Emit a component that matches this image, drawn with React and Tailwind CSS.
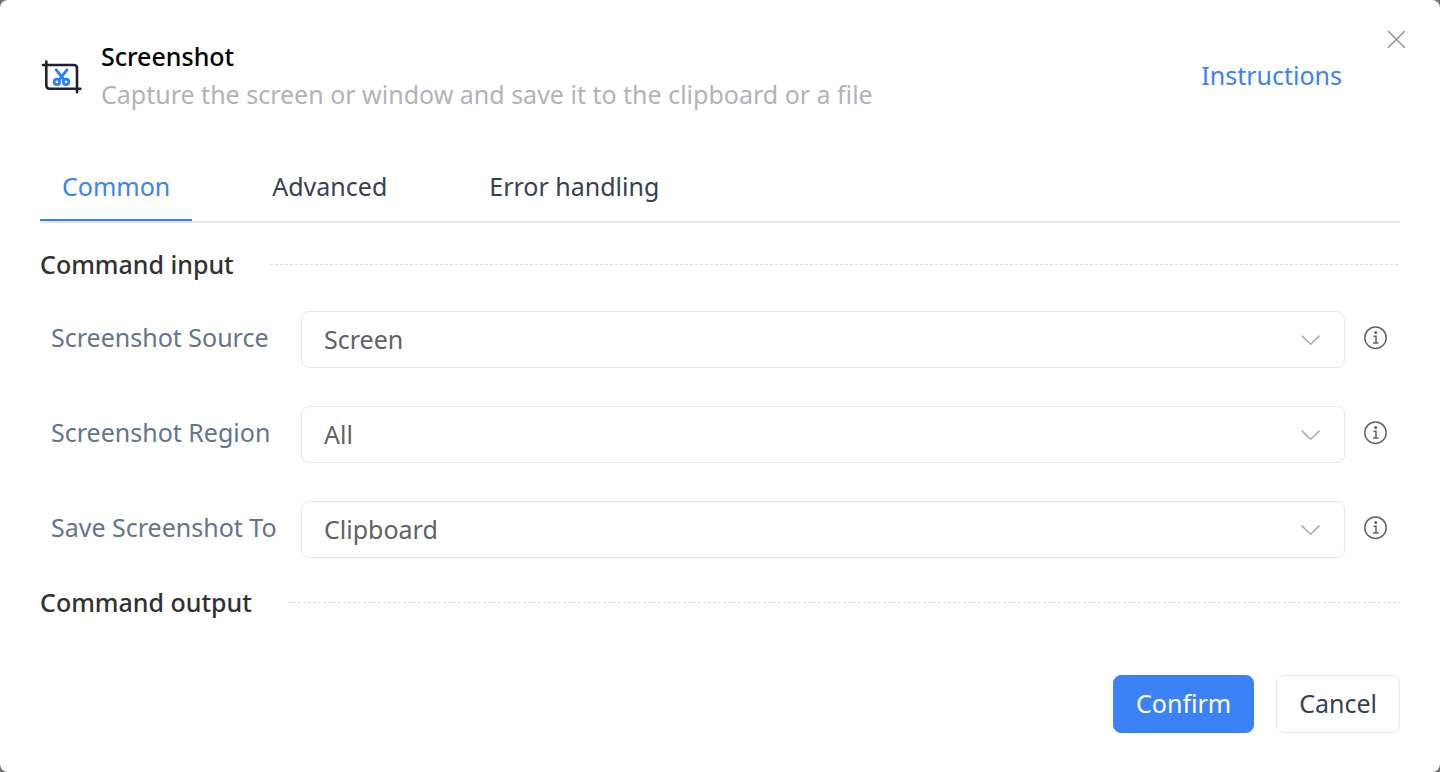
import React, { useState } from "react";

const tabs = ["Common", "Advanced", "Error handling"];

const fields = [
  { id: "source", label: "Screenshot Source", options: ["Screen", "Window"] },
  { id: "region", label: "Screenshot Region", options: ["All", "Custom"] },
  { id: "target", label: "Save Screenshot To", options: ["Clipboard", "File"] },
];

function ScreenshotIcon() {
  return (
    <svg className="h-[38px] w-[42px] shrink-0" viewBox="0 0 42 38" fill="none" strokeLinecap="round" aria-hidden="true">
      <g stroke="#231f33" strokeWidth="2.6">
        <path d="M3 9H33.7Q37 9 37 12.3V36.2" />
        <path d="M6.3 5.6V29.3Q6.3 32.8 9.8 32.8H40.4" />
      </g>
      <g stroke="#2680ff" strokeWidth="2.8">
        <path d="M16.2 13.8L23.7 23.4" />
        <path d="M27 13.8L19.5 23.4" />
        <circle cx="16.9" cy="25.9" r="2.7" />
        <circle cx="26.1" cy="25.9" r="2.7" />
      </g>
    </svg>
  );
}

function InfoIcon() {
  return (
    <svg className="size-6" viewBox="0 0 24 24" fill="none" stroke="#606266" aria-hidden="true">
      <circle cx="11.5" cy="11.7" r="10.7" strokeWidth="1.5" />
      <circle cx="11.7" cy="6.4" r="1.5" fill="#606266" stroke="none" />
      <path d="M9.5 10.2H12V16.9M9 17H14.5" strokeWidth="1.5" />
    </svg>
  );
}

function SectionTitle({ children }) {
  return (
    <div className="flex items-center gap-9">
      <h2 className="font-medium text-[#303133]">{children}</h2>
      <svg className="h-px min-w-0 flex-1" aria-hidden="true">
        <line x1="0" y1="0.5" x2="100%" y2="0.5" stroke="#dcdfe6" strokeDasharray="3 2" />
      </svg>
    </div>
  );
}

function Field({ id, label, options }) {
  return (
    <div className="flex items-center pl-[11px]">
      <label htmlFor={id} className="w-[250px] shrink-0 pb-1.5 whitespace-nowrap text-[#64748b]">
        {label}
      </label>
      <div className="relative min-w-0 flex-1">
        <select
          id={id}
          className="h-[57px] w-full appearance-none rounded-lg border border-[#e5e7eb] bg-white pr-14 pb-0.5 pl-[22px] text-[#606266]"
        >
          {options.map((option) => (
            <option key={option}>{option}</option>
          ))}
        </select>
        <svg
          className="pointer-events-none absolute top-6 right-6 h-[11px] w-5"
          viewBox="0 0 20 11"
          fill="none"
          stroke="#a8abb2"
          strokeWidth="1.5"
          aria-hidden="true"
        >
          <path d="M0.6 0.6L9.6 9.3L18.6 0.6" />
        </svg>
      </div>
      <button type="button" aria-label={`About ${label}`} className="mr-3 ml-[19px] pb-1">
        <InfoIcon />
      </button>
    </div>
  );
}

export default function App() {
  const [active, setActive] = useState("Common");
  return (
    <div className="min-h-screen bg-[#737373] font-['Noto_Sans',sans-serif] text-[25px] leading-[38px]">
      <main className="relative flex min-h-screen flex-col rounded-lg bg-white px-10 pt-[37px] pb-[39px]">
        <button type="button" aria-label="Close" className="absolute top-[29px] right-[34px]">
          <svg className="size-5" viewBox="0 0 20 20" fill="none" stroke="#909399" strokeWidth="1.5" aria-hidden="true">
            <path d="M2 2L18.8 18.8M18.8 2L2 18.8" />
          </svg>
        </button>

        <header className="flex items-center gap-[19px] pr-[58px]">
          <ScreenshotIcon />
          <div className="min-w-0 flex-1">
            <h1 className="font-medium text-black">Screenshot</h1>
            <p className="text-[#b1b3b8]">Capture the screen or window and save it to the clipboard or a file</p>
          </div>
          <a href="#instructions" className="text-[#3b82f6]">
            Instructions
          </a>
        </header>

        <nav role="tablist" className="mt-10 flex gap-[58px] border-b-2 border-[#e4e7ed]">
          {tabs.map((tab) => (
            <button
              key={tab}
              type="button"
              role="tab"
              aria-selected={tab === active}
              onClick={() => setActive(tab)}
              className={
                tab === active
                  ? "border-b-2 border-[#3b82f6] px-[22px] py-3.5 text-[#3b82f6]"
                  : "border-b-2 border-transparent px-[22px] py-3.5 text-[#374151]"
              }
            >
              {tab}
            </button>
          ))}
        </nav>

        <section className="mt-[22px]">
          <SectionTitle>Command input</SectionTitle>
          <div className="mt-7 flex flex-col gap-[38px]">
            {fields.map((field) => (
              <Field key={field.id} {...field} />
            ))}
          </div>
        </section>

        <section className="mt-[25px]">
          <SectionTitle>Command output</SectionTitle>
        </section>

        <footer className="mt-auto flex justify-end gap-[22px]">
          <button type="button" className="h-[58px] rounded-lg border border-[#3b82f6] bg-[#3b82f6] px-[22px] pb-0.5 text-white">
            Confirm
          </button>
          <button type="button" className="h-[58px] rounded-lg border border-[#e5e7eb] bg-white px-[22px] pb-0.5 text-[#374151]">
            Cancel
          </button>
        </footer>
      </main>
    </div>
  );
}
